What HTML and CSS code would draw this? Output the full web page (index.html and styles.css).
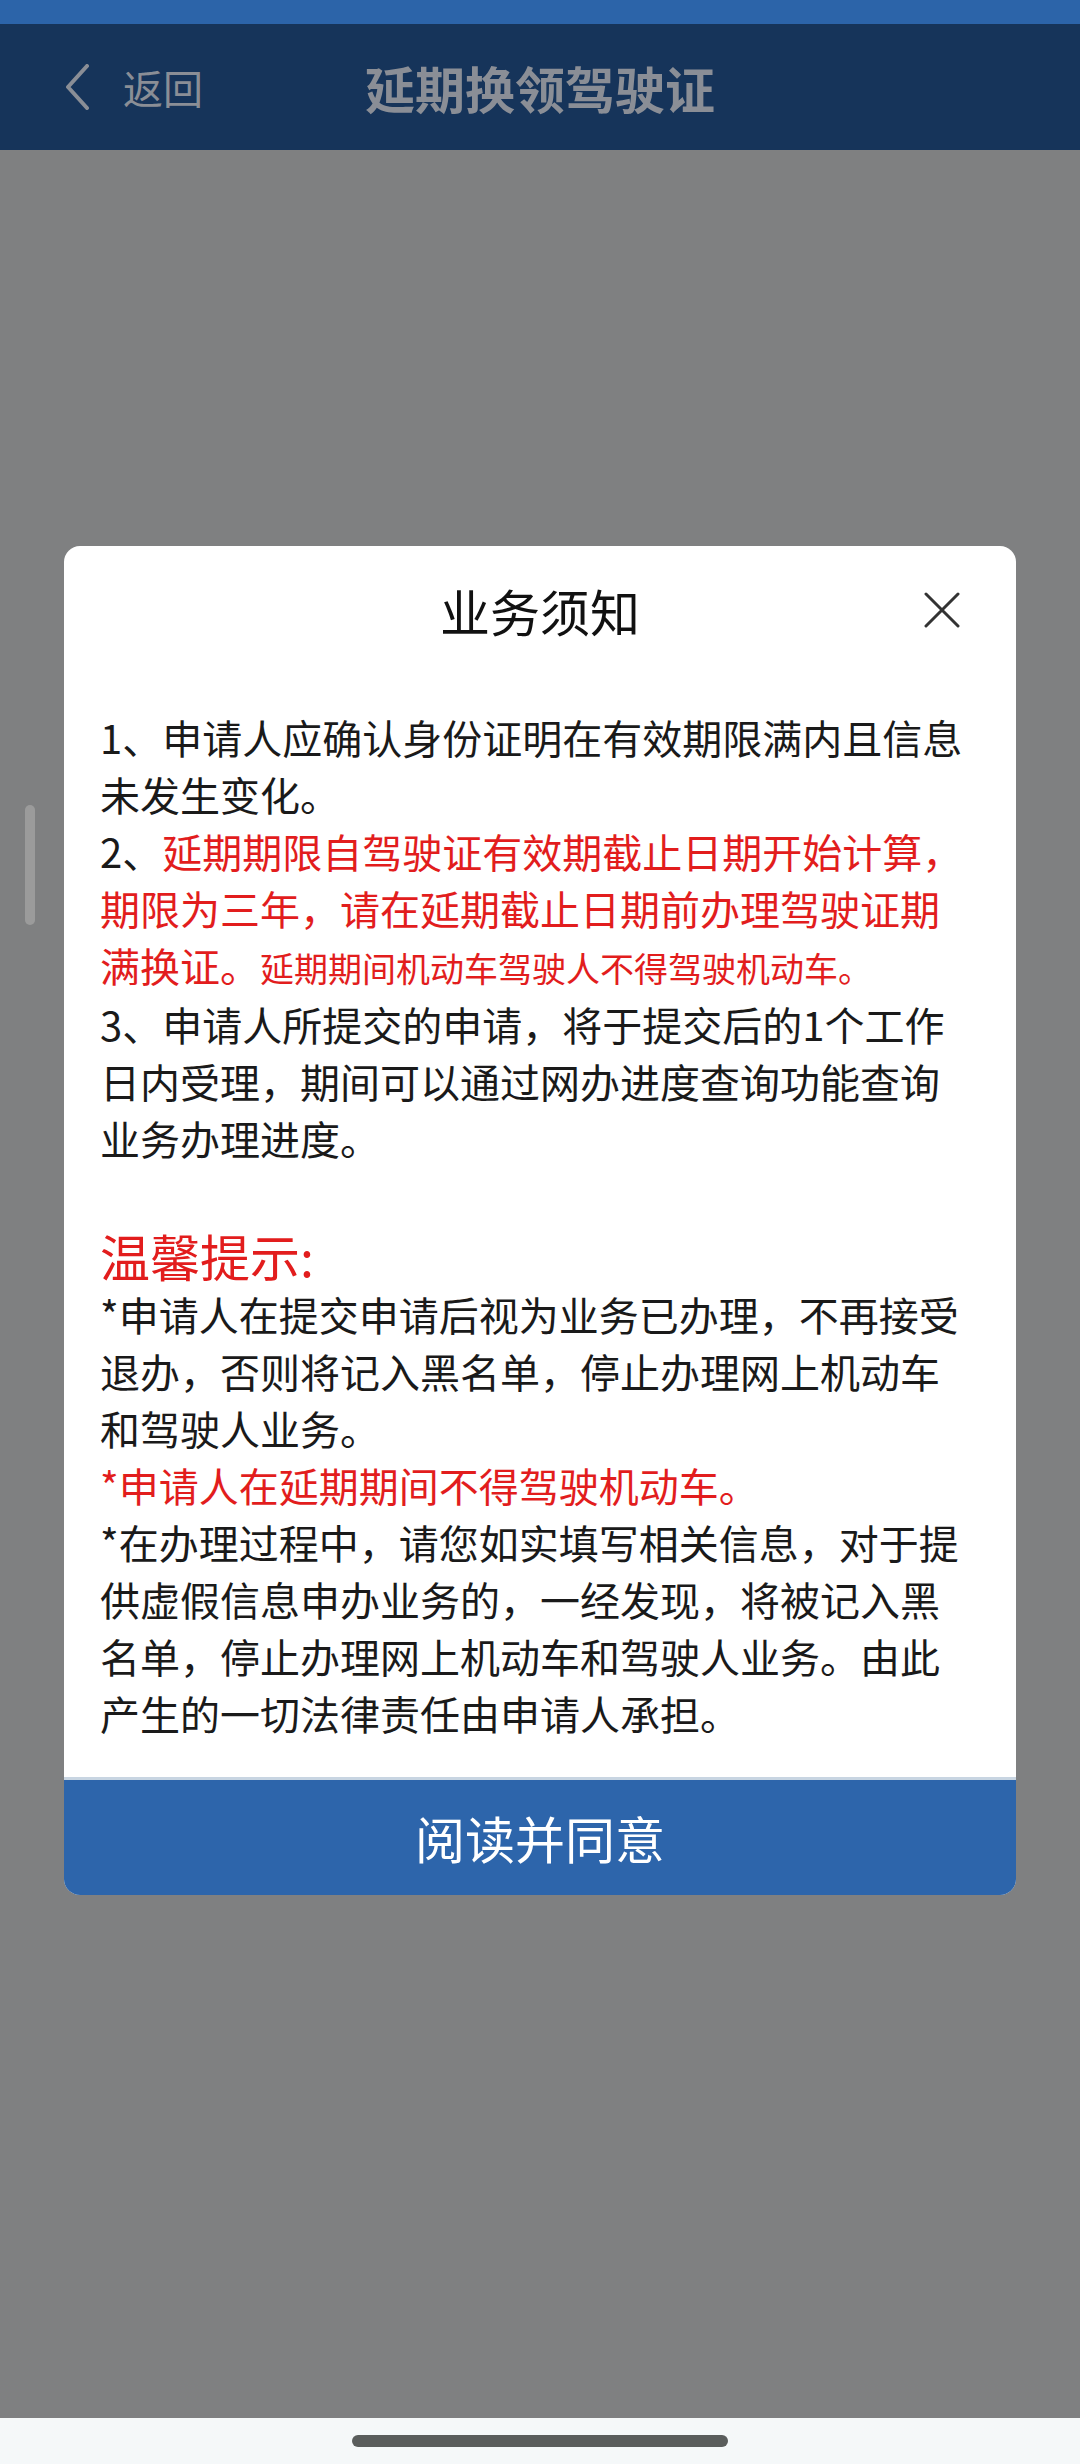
FILE: index.html
```html
<!DOCTYPE html>
<html lang="zh-CN">
<head>
	<meta charset="UTF-8">
	<meta name="viewport" content="width=device-width, initial-scale=1.0">
	<title>延期换领驾驶证</title>
	<link rel="stylesheet" href="styles.css">
</head>
<body>
	<div class="page">
		<div class="status-bar"></div>
		<div class="nav-bar">
			<a href="#" class="btn-back">
				<svg class="ico-back" width="26" height="46" viewBox="0 0 26 46"><polyline points="23,2 4,23 23,44" fill="none" stroke="#8a8e96" stroke-width="4" stroke-linecap="round" stroke-linejoin="round"/></svg>
				<span class="txt-back">返回</span>
			</a>
			<h1 class="nav-title">延期换领驾驶证</h1>
		</div>
		<div class="mask">
			<span class="scroll-thumb"></span>
			<div class="modal">
				<div class="modal-head">
					<h2 class="modal-title">业务须知</h2>
					<a href="#" class="btn-close">
						<svg width="36" height="36" viewBox="0 0 36 36"><path d="M2 2 L34 34 M34 2 L2 34" stroke="#333" stroke-width="3" stroke-linecap="round"/></svg>
					</a>
				</div>
				<div class="modal-body">
					<p class="txt">1、申请人应确认身份证明在有效期限满内且信息未发生变化。</p>
					<p class="txt"><span>2、</span><span class="red">延期期限自驾驶证有效期截止日期开始计算，</span><br><span class="red">期限为三年，请在延期截止日期前办理驾驶证期</span><br><span class="red">满换证。</span><span class="red small">延期期间机动车驾驶人不得驾驶机动车。</span></p>
					<p class="txt">3、申请人所提交的申请，将于提交后的1个工作日内受理，期间可以通过网办进度查询功能查询业务办理进度。</p>
					<p class="txt blank"></p>
					<p class="tip-title">温馨提示:</p>
					<p class="txt">*申请人在提交申请后视为业务已办理，不再接受退办，否则将记入黑名单，停止办理网上机动车和驾驶人业务。</p>
					<p class="txt red">*申请人在延期期间不得驾驶机动车。</p>
					<p class="txt">*在办理过程中，请您如实填写相关信息，对于提供虚假信息申办业务的，一经发现，将被记入黑名单，停止办理网上机动车和驾驶人业务。由此产生的一切法律责任由申请人承担。</p>
				</div>
				<a href="#" class="btn-agree">阅读并同意</a>
			</div>
		</div>
		<div class="home-bar"><span class="home-indicator"></span></div>
	</div>
</body>
</html>
```

FILE: styles.css
```css
html, body{ margin: 0; padding: 0; }
body{ font-family: "Noto Sans CJK SC", "Noto Sans", sans-serif; color: #1a1a1a; }
a{ text-decoration: none; color: inherit; }
h1, h2, p{ margin: 0; }

.page{ width: 1080px; height: 2464px; display: flex; flex-direction: column; overflow: hidden; }
.status-bar{ height: 24px; background-color: #2c64a9; }

.nav-bar{
	height: 126px; background-color: #16345a; position: relative;
	display: flex; align-items: center; justify-content: center;
}
.btn-back{
	position: absolute; left: 64px; top: 0; height: 100%;
	display: flex; align-items: center; color: #8a8e96;
}
.ico-back{ margin-right: 33px; }
.txt-back{ font-size: 40px; line-height: 1; }
.nav-title{ font-size: 50px; font-weight: bold; color: #8a8e96; line-height: 1; }

.mask{ flex: 1; background-color: #7f8081; position: relative; padding-top: 396px; }
.scroll-thumb{
	position: absolute; left: 25px; top: 655px; width: 10px; height: 120px;
	border-radius: 5px; background-color: #9b9b9b;
}

.modal{
	margin: 0 64px; background-color: #fff; border-radius: 16px; overflow: hidden;
}
.modal-head{
	height: 126px; position: relative;
	display: flex; align-items: center; justify-content: center;
}
.modal-title{ font-size: 50px; font-weight: normal; line-height: 1; color: #111; margin-top: 2px; }
.btn-close{ position: absolute; right: 56px; top: 46px; width: 36px; height: 36px; }
.btn-close svg{ display: block; }

.modal-body{ padding: 37px 46px 35px 36px; border-bottom: 3px solid #c8d5e2; }
.txt{ font-size: 40px; line-height: 57px; }
.blank{ height: 57px; }
.red{ color: #e21d1d; }
.small{ font-size: 34px; }
.tip-title{ font-size: 50px; line-height: 62px; color: #e21d1d; }

.btn-agree{
	display: block; height: 115px; background-color: #2d65ab; color: #fff;
	font-size: 50px; line-height: 115px; text-align: center;
}

.home-bar{
	height: 46px; background-color: #f5f8f9;
	display: flex; justify-content: center; align-items: flex-start;
}
.home-indicator{
	width: 376px; height: 12px; margin-top: 17px; border-radius: 6px; background-color: #5a5d5c;
}
```
